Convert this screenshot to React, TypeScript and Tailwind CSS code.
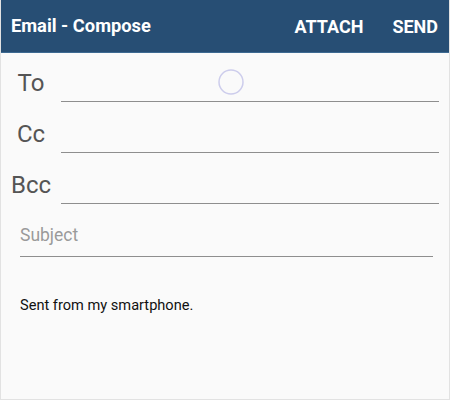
export default function App() {
  const rows = ["To", "Cc", "Bcc"];

  return (
    <div
      className="relative h-[400px] w-[450px] overflow-hidden border-x border-b border-[#e2e2e2] bg-[#fafafa]"
      style={{ fontFamily: "Roboto, 'Liberation Sans', sans-serif" }}
    >
      <header className="flex h-[53px] items-center border-b border-[#3d6a92] bg-[#274e74] pl-[10px] pr-[11px] text-white">
        <h1 className="flex-1 text-[18.3px] font-bold">Email - Compose</h1>
        <button type="button" className="text-[18px] font-bold">
          ATTACH
        </button>
        <button type="button" className="ml-[29px] text-[18px] font-bold">
          SEND
        </button>
      </header>

      {rows.map((label) => (
        <div key={label} className="flex h-[51px] items-end pb-[2px]">
          <span className="w-[60px] pb-[4px] text-center text-[24px] leading-[30px] text-[#555]">{label}</span>
          <div className="mr-[10px] h-[1px] flex-1 bg-[#8e8e8e]" />
        </div>
      ))}

      <div className="ml-[19px] mr-[16px] mt-[16px] border-b border-[#8e8e8e] pb-[8px] text-[17.5px] text-[#9a9a9a]">
        Subject
      </div>

      <p className="mx-[19px] mt-[38px] text-[14.6px] text-[#111]">Sent from my smartphone.</p>

      <svg className="absolute left-[217px] top-[69px]" width="26" height="26" viewBox="0 0 26 26">
        <circle cx="13" cy="13" r="12" fill="none" stroke="#cdcdec" strokeWidth="1.5" />
      </svg>
    </div>
  );
}
